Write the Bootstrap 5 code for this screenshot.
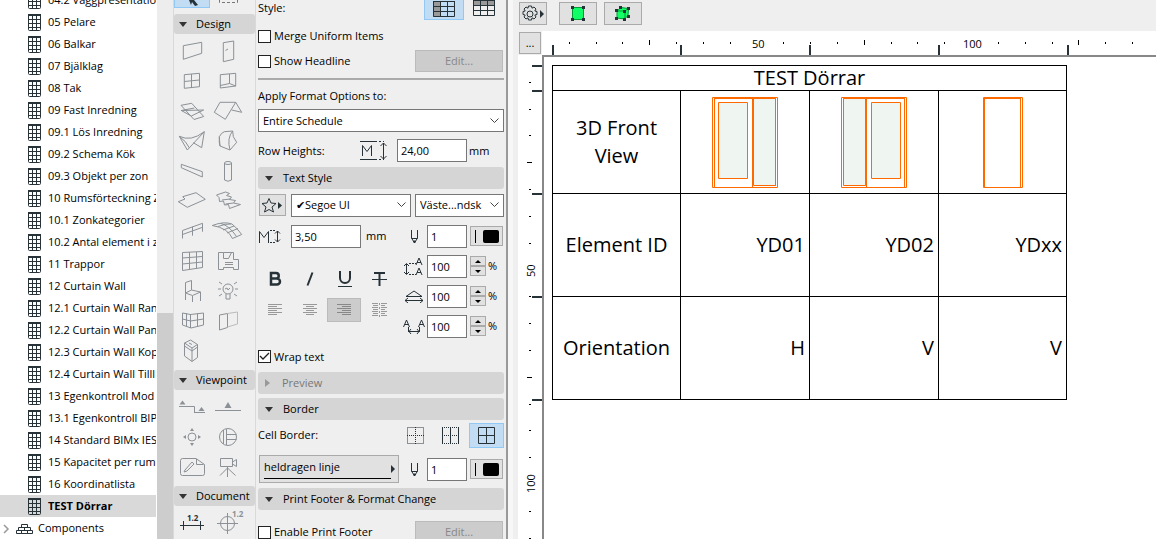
<!DOCTYPE html>
<html lang="sv">
<head>
<meta charset="utf-8">
<meta name="viewport" content="width=device-width, initial-scale=1">
<title>TEST Dörrar</title>
<link href="https://cdn.jsdelivr.net/npm/bootstrap@5.3.0/dist/css/bootstrap.min.css" rel="stylesheet">
<script src="https://cdn.jsdelivr.net/npm/bootstrap@5.3.0/dist/js/bootstrap.bundle.min.js" defer></script>
<style>
body{font:11px/16px "Open Sans","Noto Sans",sans-serif;color:#000;background:#efefef}
svg{display:block;flex:none;fill:none;stroke:#263238;stroke-width:1}
button,input,select{font:inherit;color:inherit;border-radius:0}
button{padding:0}
/* navigator tree */
.tree{width:157px;background:#fff}
.tree ul{margin-top:-11px}
.tree a{height:22px;padding-left:28px;gap:7px;color:#000;white-space:nowrap;overflow:hidden;margin-right:1px}
.tree a svg{margin-top:1px}
.tree a.picked{background:#d9d9d9;font-weight:700}
.tree a.root{padding-left:2px;gap:5px}
.scroller{width:16px;background:#ededed;padding-top:313px}
.scroller div{background:#cdcdcd}
/* toolbox */
.tools{width:83px;border:solid #d9d9d9;border-width:0 1px}
.tools .cells{display:grid;grid-template-columns:36px 36px;margin:2px 0 4px}
.tools .cells button,.flat{border:0;background:none}
.tools .cells svg{width:36px;height:30px;stroke:#8b9196}
.bar{background:#d5d5d5;border:0;border-radius:3px;text-align:left;display:flex;align-items:center;width:100%;flex:none}
.bar::before{content:"";border:4px solid transparent;border-top:5px solid #333;border-bottom:0}
.bar.shut{color:#777}
.bar.shut::before{border:4px solid transparent;border-left:5px solid #999;border-right:0;margin-right:2px}
.tools .bar{height:20px;padding-left:5px;gap:9px}
.tools .top{height:14px}
.tools .top button:first-child{width:36px;height:8px;border:1px solid #90c8f6;border-top:0;background:#c1dcf3}
/* settings */
.opts{width:252px;border-right:2px solid #999;padding:0 2px}
.opts .bar{height:22px;padding-left:7px;gap:10px}
.rule{flex:none;height:2px;margin-top:5px;background:#aaa}
.line{display:flex;align-items:center;flex:none}
.h26{height:26px}.h30{height:30px}
.box{appearance:none;width:13px;height:13px;border:1px solid #222;background:#fff;margin:0 3px 0 0;flex:none}
.box:checked{background:#fff url("data:image/svg+xml,%3Csvg xmlns='http://www.w3.org/2000/svg' viewBox='0 0 11 11'%3E%3Cpath d='M1 5l3 3 6-6' fill='none' stroke='%23222' stroke-width='1.3'/%3E%3C/svg%3E")}
.edit{width:88px;height:22px;border:1px solid #bbb;background:#ccc;color:#888;margin-right:1px}
.field{height:23px;border:1px solid #777;background:#fff;padding:0 3px;min-width:0}
.w70{width:70px}.w40{width:40px}
.pick{flex:none;height:23px;border:1px solid #777;padding:0 18px 0 4px;appearance:none;background:#fff url("data:image/svg+xml,%3Csvg xmlns='http://www.w3.org/2000/svg' width='9' height='6'%3E%3Cpath d='M.5.5l4 4 4-4' fill='none' stroke='%23444'/%3E%3C/svg%3E") no-repeat right 4px center}
.key{border:1px solid #aaa;background:#e1e1e1;display:flex;align-items:center;justify-content:center;flex:none}
.on{border:1px solid #90c8f6;background:#c1dcf3;display:flex;align-items:center;justify-content:center}
.grip{width:33px;height:20px;gap:7px;margin-right:1px}
.grip::before{content:"";width:1px;height:13px;background:#000}
.grip::after{content:"";width:16px;height:13px;border-radius:2px;background:#000}
.spin{width:16px}
.spin button{height:10px;width:16px}
.spin button::before{content:"";border:3px solid transparent;border-bottom:3px solid #000;border-top:0}
.spin button:last-child::before{border:3px solid transparent;border-top:3px solid #000;border-bottom:0}
.styles{display:grid;grid-template-columns:34px 35px 35px 35px;grid-template-rows:38px 24px;margin-top:9px}
.styles button{display:flex;align-items:center;justify-content:center;border:0;background:none}
.styles .down{background:#ccc;border:1px solid #bbb;width:34px}
/* schedule */
.gap{width:5px;background:#f7f7f7}
.sheet{background:#fff}
.top-ruler text,.sheet text{font:11px "Open Sans",sans-serif;fill:#000;stroke:none}
.top-ruler{height:24px;overflow:hidden;background:#fff}
.paper{border:solid #888;border-width:2px 0 0 2px;padding:8px}
.sched{border-collapse:collapse;table-layout:fixed;width:515px;font-size:20px;line-height:28px;color:#000}
.sched col{width:129px}
.sched col:first-child,.sched col:last-child{width:128px}
.sched th,.sched td{border:1px solid #000;height:103px;padding:0 4px;font-weight:400;text-align:right}
.sched thead th{height:25px;line-height:24px;text-align:center}
.sched tbody th,.sched .pic{text-align:center}
.sched svg{margin:0 auto;stroke:#ff6a00}
.glass{fill:#eff5f1}
</style>
</head>
<body>
<svg width="0" height="0" class="position-absolute"><defs>
<symbol id="sheet" viewBox="0 0 13 17"><rect x=".5" y=".5" width="12" height="16" rx="1"/><path d="M0 5.500h13M0 9.500h13M0 13.500h13M4.500 2v15M8.500 2v15"/><path d="M0 1h13" stroke-width="2"/></symbol>
<symbol id="pen" viewBox="0 0 9 15"><path d="M1.500 1v8l3 5 3-5V1M1.500 9.500h6"/><path d="M3.500 12h2l-1 2z" fill="#263238"/></symbol>
</defs></svg>
<div class="d-flex vh-100 overflow-hidden">
<nav class="tree flex-shrink-0 overflow-hidden"><ul class="list-unstyled mb-0">
<li><a href="#" class="d-flex align-items-center text-decoration-none"><svg width="13" height="17"><use href="#sheet"/></svg>04.2 Väggpresentation</a></li>
<li><a href="#" class="d-flex align-items-center text-decoration-none"><svg width="13" height="17"><use href="#sheet"/></svg>05 Pelare</a></li>
<li><a href="#" class="d-flex align-items-center text-decoration-none"><svg width="13" height="17"><use href="#sheet"/></svg>06 Balkar</a></li>
<li><a href="#" class="d-flex align-items-center text-decoration-none"><svg width="13" height="17"><use href="#sheet"/></svg>07 Bjälklag</a></li>
<li><a href="#" class="d-flex align-items-center text-decoration-none"><svg width="13" height="17"><use href="#sheet"/></svg>08 Tak</a></li>
<li><a href="#" class="d-flex align-items-center text-decoration-none"><svg width="13" height="17"><use href="#sheet"/></svg>09 Fast Inredning</a></li>
<li><a href="#" class="d-flex align-items-center text-decoration-none"><svg width="13" height="17"><use href="#sheet"/></svg>09.1 Lös Inredning</a></li>
<li><a href="#" class="d-flex align-items-center text-decoration-none"><svg width="13" height="17"><use href="#sheet"/></svg>09.2 Schema Kök</a></li>
<li><a href="#" class="d-flex align-items-center text-decoration-none"><svg width="13" height="17"><use href="#sheet"/></svg>09.3 Objekt per zon</a></li>
<li><a href="#" class="d-flex align-items-center text-decoration-none"><svg width="13" height="17"><use href="#sheet"/></svg>10 Rumsförteckning Z</a></li>
<li><a href="#" class="d-flex align-items-center text-decoration-none"><svg width="13" height="17"><use href="#sheet"/></svg>10.1 Zonkategorier</a></li>
<li><a href="#" class="d-flex align-items-center text-decoration-none"><svg width="13" height="17"><use href="#sheet"/></svg>10.2 Antal element i z</a></li>
<li><a href="#" class="d-flex align-items-center text-decoration-none"><svg width="13" height="17"><use href="#sheet"/></svg>11 Trappor</a></li>
<li><a href="#" class="d-flex align-items-center text-decoration-none"><svg width="13" height="17"><use href="#sheet"/></svg>12 Curtain Wall</a></li>
<li><a href="#" class="d-flex align-items-center text-decoration-none"><svg width="13" height="17"><use href="#sheet"/></svg>12.1 Curtain Wall Ran</a></li>
<li><a href="#" class="d-flex align-items-center text-decoration-none"><svg width="13" height="17"><use href="#sheet"/></svg>12.2 Curtain Wall Pan</a></li>
<li><a href="#" class="d-flex align-items-center text-decoration-none"><svg width="13" height="17"><use href="#sheet"/></svg>12.3 Curtain Wall Kop</a></li>
<li><a href="#" class="d-flex align-items-center text-decoration-none"><svg width="13" height="17"><use href="#sheet"/></svg>12.4 Curtain Wall Tilll</a></li>
<li><a href="#" class="d-flex align-items-center text-decoration-none"><svg width="13" height="17"><use href="#sheet"/></svg>13 Egenkontroll Mod</a></li>
<li><a href="#" class="d-flex align-items-center text-decoration-none"><svg width="13" height="17"><use href="#sheet"/></svg>13.1 Egenkontroll BIP</a></li>
<li><a href="#" class="d-flex align-items-center text-decoration-none"><svg width="13" height="17"><use href="#sheet"/></svg>14 Standard BIMx IES</a></li>
<li><a href="#" class="d-flex align-items-center text-decoration-none"><svg width="13" height="17"><use href="#sheet"/></svg>15 Kapacitet per rum</a></li>
<li><a href="#" class="d-flex align-items-center text-decoration-none"><svg width="13" height="17"><use href="#sheet"/></svg>16 Koordinatlista</a></li>
<li><a href="#" class="d-flex align-items-center text-decoration-none picked"><svg width="13" height="17"><use href="#sheet"/></svg>TEST Dörrar</a></li>
<li><a href="#" class="d-flex align-items-center text-decoration-none root"><svg width="31" height="13"><path d="M2 3l4 4-4 4" stroke="#999" stroke-width="1.5"/><path d="M14.500 8.500h5v3h-5zM19.500 8.500h6v3h-6zM25.500 8.500h5v3h-5zM16.500 5.500h6v3h-6zM22.500 5.500h6v3h-6zM19.500 2.500h6v3h-6z"/></svg>Components</a></li>
</ul></nav>
<div class="scroller flex-shrink-0"><div class="h-100"></div></div>
<aside class="tools flex-shrink-0 overflow-hidden">
<div class="top d-flex"><button class="flat d-flex" aria-label="Arrow"><svg width="34" height="8"><path d="M14 0h5l4 5-3 1-3-4-1 3z" fill="#263238" stroke="none"/></svg></button><button class="flat d-flex" aria-label="Marquee"><svg width="36" height="5"><path d="M9.500 0v2.500h18V0" stroke-dasharray="3 2" stroke="#777"/></svg></button></div>
<button class="bar">Design</button>
<div class="cells">
<button aria-label="Wall"><svg><path d="M9.300 9.700L27.700 6.300V17.300L9.300 23.300z"/></svg></button>
<button aria-label="Door"><svg><path d="M13.300 6.700L23.700 5V23.300L13.300 25.700zM15.500 14.500l2.500-1.500"/></svg></button>
<button aria-label="Window"><svg><path d="M10.300 8.700L25.500 7.300V20.700L10.300 22.300zM17.500 8v13.700M10.300 15.500l15-1.500"/></svg></button>
<button aria-label="Corner Window"><svg><path d="M10.300 8.700L25.700 7.300V20L10.300 22zM19.500 8v9.500M10.300 19.500l9.200-2 6.200 2.500"/></svg></button>
<button aria-label="Slab"><svg><path d="M7 9.300L17.700 7.300 29.700 20.500 20 23.500zM7.300 14.500l22.300-.5M7.300 14.500l10 5.500 12.300-6M7.300 14.500l13-2.500"/></svg></button>
<button aria-label="Roof"><svg><path d="M4.300 16.300L10 6.300H25.700L15.300 23.300zM25.700 6.300l6 10-10-2.300"/></svg></button>
<button aria-label="Shell"><svg><path d="M5.300 10.300L13.300 24 30.300 5.700Q17 16 5.300 10.300zM30.300 5.700l-2.600 16-8.400-5M5.300 10.300q7 5 10 11.500"/></svg></button>
<button aria-label="Morph"><svg><path d="M9.300 10.700q2-4 5-5l8.400-.7.600 5.700 3.400 5.600L20 24l-10-4zM22.700 5q-6 7-2.700 19M9.300 10.700v6l.7 3.300"/></svg></button>
<button aria-label="Beam"><svg><path d="M7.300 8.300l21 7.400V21l-21-9.300z"/></svg></button>
<button aria-label="Column"><svg><path d="M14.500 7v17q3.500 2.500 7 0V7"/><ellipse cx="18" cy="7" rx="3.500" ry="1.500"/></svg></button>
<button aria-label="Plate"><svg><path d="M4.300 15.700L11 13 8.700 10.700 22 6.700 31.300 13.300 13.300 21.300z"/></svg></button>
<button aria-label="Stair"><svg><path d="M6.500 9l9-3 4 1.500-3 2 5 1.500-2 2.500 6 1-2 2.500 7 1.500-11 4-1-4-4 .5-1-4-4 .5-.5-4zM12 14l8-1M15.500 18l8-1"/></svg></button>
<button aria-label="Railing"><svg><path d="M8.500 22.500v-8L28.500 7.300v8.400M18.500 10.700v9M8.500 18.500l20-7.200"/></svg></button>
<button aria-label="Mesh"><svg><path d="M2.300 9.500Q14 5 22 8q5 4 9.700 10.500l-9.300 4Q18 12 2.300 9.500zM8 10.500q8-3 13-2.500M13 14l11-4M17 17l11-4.500M11 7.500q8 2 15.500 13"/></svg></button>
<button aria-label="Curtain Wall"><svg><path d="M8.500 6.500l20-1v16l-20 3zM15.500 6v17.500M22.500 6v16.500M8.500 12l20-1.500M8.500 18l20-2"/></svg></button>
<button aria-label="Zone"><svg><path d="M8.500 6.500h5v6h5l3-6h2v7h5v10h-5v-2h-10v2h-5zM13.500 6.500h9M15 16.500h8M15 18.500h8"/></svg></button>
<button aria-label="Object"><svg><path d="M11.500 17.500v-11l6-2V14l9 2v9M11.500 17.500V24M18.500 20v6M11.500 17l7 2.500 8-3.500M17.500 14l-6 3"/></svg></button>
<button aria-label="Lamp"><svg><circle cx="18" cy="13" r="5"/><path d="M16 18v5h4v-5M15 13l2-1 1 2 2-2M8 13h3M25 13h3M9 6l3 2M27 6l-3 2M9 20l3-2M27 20l-3-2"/></svg></button>
<button aria-label="Curtain Corner"><svg><path d="M8.500 7l8 1.500 13-1.500v12L17 22l-8.500-3zM16.500 8v14M12.500 7.500v13M23.500 7.500v13M8.500 13l8 2 13-2"/></svg></button>
<button aria-label="Opening"><svg><path d="M17.500 7.500L9.500 9v15l8-2.500z"/><path d="M17.500 7.500l10-1.500v12l-10 3" stroke="#bbb"/></svg></button>
<button aria-label="Equipment"><svg><path d="M10.500 7l6-3 7 4.500v13l-5.500 4L10.500 20zM10.500 7l7.500 5 5.500-3.500M18 12v13.500M10.500 10l7.500 5 5.500-4M15 7l3 1.500"/></svg></button>
</div>
<button class="bar">Viewpoint</button>
<div class="cells">
<button aria-label="Section"><svg><path d="M5 14.500h15.500v6M20 20.500h11"/><path d="M5.500 12.500h6l-3-4zM24.500 19h6l-3-4z" fill="#8b9196" stroke="none"/></svg></button>
<button aria-label="Elevation"><svg><path d="M5 18.500h26"/><path d="M14.500 16h7l-3.500-6z" fill="#8b9196" stroke="none"/></svg></button>
<button aria-label="Interior Elevation"><svg><circle cx="18" cy="15" r="4"/><path d="M16 9h4l-2-3zM16 21h4l-2 3zM12 13v4l-3-2zM24 13v4l3-2z" fill="#8b9196" stroke="none"/></svg></button>
<button aria-label="Detail"><svg><circle cx="18" cy="15" r="8.500"/><path d="M16.500 7v16M13.500 8v14M16.500 12.500h10M16.500 17.500h10"/></svg></button>
<button aria-label="Worksheet"><svg><path d="M6.500 8.500q0-2 2-2H22l8.500 6v9q0 2-2 2h-20q-2 0-2-2zM22.500 7v5.500h7M11 18l7-8 2 2-7 7-3 1z"/></svg></button>
<button aria-label="Camera"><svg><path d="M10.500 6.500h12v8h-12zM22.500 10l4-2.500v7l-4-2.500M17.500 14.500V25M17.500 16L10 23.500M17.500 16l8 7.500"/></svg></button>
</div>
<button class="bar">Document</button>
<div class="cells">
<button aria-label="Dimension"><svg style="stroke:#263238"><path d="M6 17.500h24M9.500 13v9M26.500 13v9"/><text x="13" y="13" font-size="8" font-weight="700" fill="#263238" stroke="none">1.2</text></svg></button>
<button aria-label="Level Dimension"><svg><circle cx="17.500" cy="15.500" r="7"/><path d="M7 15.500h21M17.500 5v21"/><text x="22" y="9" font-size="8" font-weight="700" fill="#8b9196" stroke="none">1.2</text></svg></button>
</div>
</aside>
<section class="opts flex-shrink-0 overflow-hidden d-flex flex-column">
<div class="line justify-content-between align-items-start" style="height:23px"><span>Style:</span>
<div class="d-flex align-items-start" style="gap:9px;margin-right:9px"><button class="on border-top-0" aria-label="Header left" style="width:40px;height:20px"><svg width="22" height="17"><path d="M0 0h7v16H0z" fill="#999" stroke="none"/><path d="M.5 0v15.500h21V0M0 5.500h22M0 10.500h22M7.500 0v16M14.500 0v16M0 .5h22"/></svg></button>
<button class="flat" aria-label="Header top"><svg width="22" height="17"><path d="M0 0h22v6H0z" fill="#999" stroke="none"/><path d="M.5 0v15.500h21V0M0 5.500h22M0 10.500h22M7.500 0v16M14.500 0v16M0 .5h22"/></svg></button></div></div>
<label class="line h26"><input type="checkbox" class="box">Merge Uniform Items</label>
<div class="line justify-content-between" style="height:24px"><label class="line"><input type="checkbox" class="box">Show Headline</label><button class="edit" disabled>Edit...</button></div>
<div class="rule"></div>
<label for="apply" class="line" style="height:29px;padding-top:3px">Apply Format Options to:</label>
<select id="apply" class="pick w-100"><option>Entire Schedule</option></select>
<div class="line" style="height:35px;padding-top:2px"><label for="rowh" class="me-auto">Row Heights:</label><svg width="27" height="20" class="me-2"><path d="M0 .5h15M0 18.500h15M2.500 15V4.500l4.500 6 4.500-6V15M23.500 2v16M20.500 5l3-3 3 3M20.500 15l3 3 3-3"/><path d="M15 .5h9M15 18.500h9" stroke-dasharray="2 2"/></svg><input id="rowh" class="field w70" value="24,00" style="margin-left:2px"><span style="width:35px;margin-left:2px">mm</span></div>
<button class="bar">Text Style</button>
<div class="line gap-1" style="height:32px"><button class="key" aria-label="Favorites" style="width:27px;height:22px;margin-right:1px;margin-left:1px"><svg width="23" height="16"><path d="M8 1.500l2 4.500 5 .5-4 3.500 1.500 5L8 12.500 3.500 15 5 10 1 6.500 6 6z"/><path d="M17 5l4 3.500-4 3.500z" fill="#263238" stroke="none"/></svg></button><select class="pick" aria-label="Font" style="width:120px"><option>✔Segoe UI</option></select><select class="pick flex-fill" aria-label="Script"><option>Väste...ndsk</option></select></div>
<div class="d-flex flex-shrink-0">
<div style="width:152px"><div class="line h30"><svg width="23" height="15"><path d="M1.500 14V2.500l4.500 6 4.500-6V14M19.500 2v11M17 4.500L19.500 2 22 4.500M17 10.500l2.500 2.500 2.500-2.500"/><path d="M12 1.500h6M12 13.500h6" stroke-dasharray="2 1"/></svg><input class="field w70" aria-label="Text size" value="3,50" style="margin:0 5px 0 10px">mm</div>
<div class="styles">
<button aria-label="Bold"><svg width="14" height="16"><path d="M3 2h5a2.500 2.500 0 010 5.500H3zM3 7.500h6a3 3 0 010 6H3z" stroke-width="2.500"/></svg></button>
<button aria-label="Italic"><svg width="14" height="16"><path d="M9.500 1.500l-5 13" stroke-width="2"/></svg></button>
<button aria-label="Underline"><svg width="14" height="18"><path d="M2 1v7a5 5 0 0010 0V1" stroke-width="2"/><path d="M0 16.500h14"/></svg></button>
<button aria-label="Strike"><svg width="15" height="16"><path d="M2 2h11M7.500 2v13" stroke-width="2"/><path d="M0 8.500h15"/></svg></button>
<button aria-label="Left"><svg width="14" height="12" style="stroke:#999"><path d="M0 .5h14M0 2.500h9M0 4.500h14M0 6.500h9M0 8.500h14M0 10.500h9"/></svg></button>
<button aria-label="Center"><svg width="14" height="12" style="stroke:#999"><path d="M0 .5h14M3 2.500h8M0 4.500h14M3 6.500h8M0 8.500h14M3 10.500h8"/></svg></button>
<button aria-label="Right" class="down"><svg width="14" height="12" style="stroke:#888"><path d="M0 .5h14M5 2.500h9M0 4.500h14M5 6.500h9M0 8.500h14M5 10.500h9"/></svg></button>
<button aria-label="Justify"><svg width="15" height="14" style="stroke:#999"><path d="M0 .5h6M9 .5h6M1 2.500h5M9 2.500h4M0 4.500h6M9 4.500h6M1 6.500h5M9 6.500h4M0 8.500h6M9 8.500h6M1 10.500h5M9 10.500h4M0 12.500h6M9 12.500h6"/><path d="M7.500 0v14" stroke-dasharray="2 2"/></svg></button>
</div></div>
<div class="flex-fill">
<div class="line h30 justify-content-end"><svg width="9" height="15" style="margin-right:8px"><use href="#pen"/></svg><input class="field w40" aria-label="Pen" value="1" style="margin-right:3px"><button class="key grip" aria-label="Pen color"></button></div>
<div class="line h30"><svg width="21" height="19" style="margin-left:-7px;margin-right:3px"><path d="M3.500 7v10M1 9l2.500-2.500L6 9M1 15l2.500 2.500L6 15M13 8l3-7 3 7M14 5.500h4M13 18l3-7 3 7M14 15.500h4"/><path d="M6 6.500h7M6 17.500h7" stroke-dasharray="2 1"/></svg><input class="field w40" aria-label="Leading" value="100" style="margin-right:3px"><span class="spin"><button class="key" aria-label="Up"></button><button class="key" aria-label="Down"></button></span><span style="margin-left:2px">%</span></div>
<div class="line h30"><svg width="21" height="14" style="margin-left:-7px;margin-right:3px"><path d="M3 7.500L11 2l8 5.500zM2 11.500h18M5 9l-3 2.500L5 14M17 9l3 2.500-3 2.500"/></svg><input class="field w40" aria-label="Width factor" value="100" style="margin-right:3px"><span class="spin"><button class="key" aria-label="Up"></button><button class="key" aria-label="Down"></button></span><span style="margin-left:2px">%</span></div>
<div class="line h30"><svg width="22" height="15" style="margin-left:-7px;margin-right:2px"><path d="M.5 8l3-7 3 7M2 5.500h3M15.500 8l3-7 3 7M17 5.500h3M6 12.500h10M8 10l-2 2.500L8 15M14 10l2 2.500-2 2.500M5.500 8v5M16.500 8v5"/></svg><input class="field w40" aria-label="Spacing" value="100" style="margin-right:3px"><span class="spin"><button class="key" aria-label="Up"></button><button class="key" aria-label="Down"></button></span><span style="margin-left:2px">%</span></div>
</div></div>
<label class="line" style="height:31px"><input type="checkbox" class="box" checked>Wrap text</label>
<button class="bar shut">Preview</button>
<button class="bar mt-1">Border</button>
<div class="line h30"><span class="me-auto">Cell Border:</span><button class="flat" aria-label="No border"><svg width="17" height="17"><path d="M.5.500h16v16H.5zM8.500 0v17M0 8.500h17" stroke-dasharray="1 1"/></svg></button><button class="flat" aria-label="Vertical border" style="margin:0 10px 0 18px"><svg width="17" height="17"><path d="M.5 0v17M8.500 0v17M16.500 0v17"/><path d="M0 .5h17M0 8.500h17M0 16.500h17" stroke-dasharray="1 1"/></svg></button><button class="on" aria-label="All borders" style="width:35px;height:25px"><svg width="17" height="17"><path d="M.5.500h16v16H.5zM8.500 0v17M0 8.500h17"/></svg></button></div>
<div class="line" style="height:38px"><button class="key justify-content-between" style="width:140px;height:28px;padding:0 2px 0 4px;margin-left:1px"><span class="text-start" style="width:127px;border-bottom:1px solid #000;height:20px">heldragen linje</span><svg width="5" height="8"><path d="M0 0l4 4-4 4z" fill="#263238" stroke="none"/></svg></button><svg width="9" height="15" style="margin:0 8px 0 auto"><use href="#pen"/></svg><input class="field w40" aria-label="Border pen" value="1" style="margin-right:3px"><button class="key grip" aria-label="Border color"></button></div>
<button class="bar">Print Footer &amp; Format Change</button>
<div class="line justify-content-between" style="height:44px"><label class="line"><input type="checkbox" class="box">Enable Print Footer</label><button class="edit" disabled>Edit...</button></div>
</section>
<div class="gap flex-shrink-0"></div>
<main class="flex-fill d-flex flex-column overflow-hidden" style="padding-left:5px">
<div class="d-flex flex-shrink-0" style="height:31px;padding:2px 0 6px 1px"><button class="key" aria-label="Settings" style="width:28px;margin-right:12px"><svg width="24" height="17"><circle cx="9" cy="9" r="3"/><path d="M7.500 1h3l.5 2.200 2-1.200 2 2-1.200 2 2.200.5v3l-2.200.5 1.200 2-2 2-2-1.200-.5 2.200h-3L7 12.800 5 14l-2-2 1.200-2L2 9.500v-3L4.200 6 3 4l2-2 2 1.200z"/><path d="M19 5l4 4-4 4z" fill="#263238" stroke="none"/></svg></button><button class="key" aria-label="Select 2D" style="width:38px;margin-right:7px"><svg width="14" height="15"><path d="M1.500 1.500h11v12h-11z" fill="#1f6" stroke="#093"/><path d="M0 0h3v3H0zM11 0h3v3h-3zM0 12h3v3H0zM11 12h3v3h-3z" fill="#263238" stroke="none"/></svg></button><button class="key" aria-label="Select 3D" style="width:38px"><svg width="16" height="15"><path d="M2 5l4-3.500 7.500 1-.5 7L9.500 13 2 12z" fill="#1f6" stroke="#093"/><path d="M2 5h8v8M10 5l4-3" stroke="#093"/><path d="M0 3h3v3H0zM4 0h3v3H4zM12 1h3v3h-3zM8 4h3v3H8zM0 11h3v3H0zM8 12h3v3H8zM12 9h3v3h-3z" fill="#263238" stroke="none"/></svg></button></div>
<div class="d-flex flex-shrink-0"><div class="flex-shrink-0" style="width:24px;padding:1px"><button class="key w-100" style="height:22px">...</button></div>
<div class="top-ruler flex-fill"><svg width="614" height="24"><path d="M27.500 11v2M54.500 11v2M80.500 11v2M107.500 9v5M134.500 11v2M161.500 11v2M188.500 11v2M241.500 11v2M268.500 11v2M295.500 11v2M322.500 9v5M349.500 11v2M375.500 11v2M402.500 11v2M456.500 11v2M483.500 11v2M510.500 11v2M536.500 9v5M563.500 11v2M590.500 11v2" stroke="#000"/><path d="M11 14v10M139 14v10M268 14v10M397 14v10M526 14v10" stroke-width="2"/><text x="210" y="17">50</text><text x="421" y="17">100</text></svg></div></div>
<div class="d-flex flex-fill overflow-hidden sheet"><svg width="24" height="484"><path d="M11 27.500h2M11 54.500h2M11 80.500h2M9 107.500h5M11 134.500h2M11 161.500h2M11 188.500h2M11 241.500h2M11 268.500h2M11 295.500h2M9 322.500h5M11 349.500h2M11 375.500h2M11 402.500h2M11 456.500h2M11 483.500h2" stroke="#000"/><path d="M14 11h10M14 36h10M14 139h10M14 242h10M14 345h10" stroke-width="2"/><text transform="translate(17 222) rotate(-90)">50</text><text transform="translate(17 438) rotate(-90)">100</text></svg>
<div class="paper flex-fill"><table class="sched"><colgroup><col><col><col><col></colgroup><thead><tr><th colspan="4">TEST Dörrar</th></tr></thead><tbody>
<tr><th>3D Front View</th>
<td class="pic"><svg width="66" height="91"><path d="M.5.500h65v90H.5zM2.500 1.500v89M2 1.500h62M40.500 1v89M63.500 1v88"/><path class="glass" d="M6.500 5.500h29v76h-29zM41.500 1.500h22v87h-22z"/></svg></td>
<td class="pic"><svg width="66" height="91"><path d="M.5.500h65v90H.5zM63.500 1v89M2 1.500h62M25.500 1v89"/><path class="glass" d="M30.500 5.500h29v76h-29zM2.500 1.500h22v87h-22z"/></svg></td>
<td class="pic"><svg width="40" height="91"><path d="M.5.500h39v90H.5zM1.500 1v89M1 1.500h37M37.500 1v89"/></svg></td></tr>
<tr><th>Element ID</th><td>YD01</td><td>YD02</td><td>YDxx</td></tr>
<tr><th>Orientation</th><td>H</td><td>V</td><td>V</td></tr>
</tbody></table></div></div>
</main>
</div>
</body>
</html>
